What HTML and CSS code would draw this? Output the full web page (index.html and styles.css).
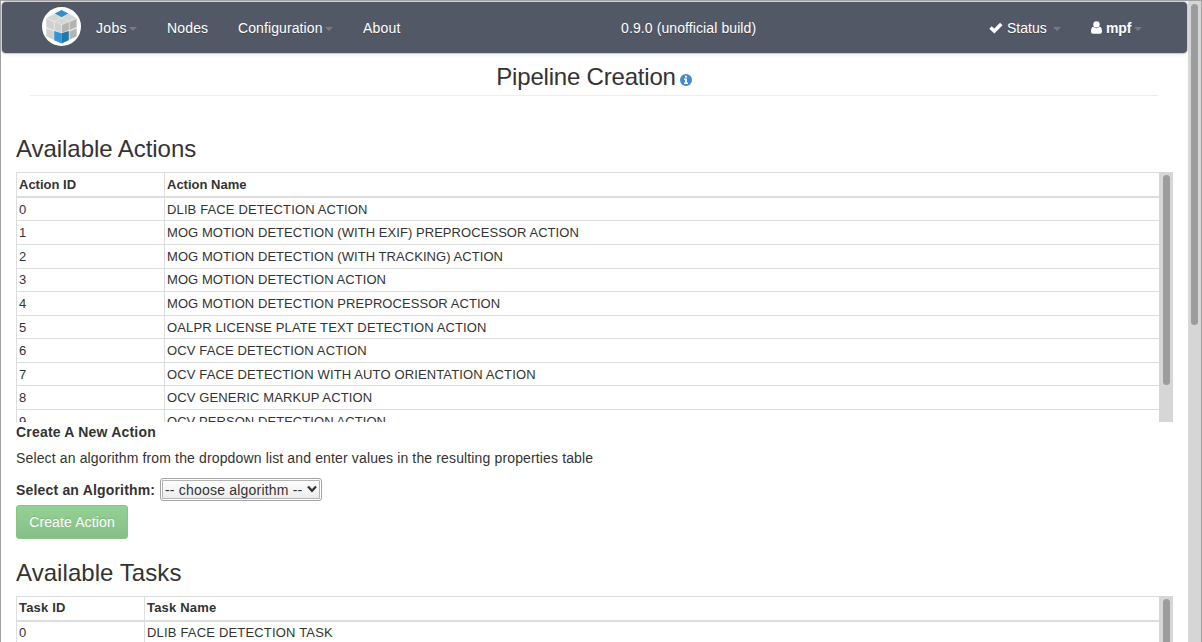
FILE: index.html
```
<!DOCTYPE html>
<html lang="en">
<head>
<meta charset="utf-8">
<title>Pipeline Creation</title>
<link rel="stylesheet" href="styles.css">
</head>
<body>
<div class="viewport">
  <div class="page">
    <nav class="navbar">
      <svg class="logo" viewBox="0 0 40 40" width="39" height="39">
        <circle cx="20" cy="20" r="20" fill="#fff"/>
        <path d="M20 3L35.500 11V30L20 37.500L4.500 30V11Z" fill="#e9e9e7"/>
        <path d="M4.500 12L12 15.500V23.500L4.500 20.500Z M4.500 22L12 25V33.500L4.500 30Z M13 15.500L19.700 18.500V26.300L13 23.500Z" fill="#d0d1cf"/>
        <path d="M35.500 12L28.300 15.500V23.500L35.500 20.500Z M35.500 22L28.300 25V33.500L35.500 30Z M27.500 15.500L20.500 18.500V26.300L27.500 23.500Z" fill="#b3b5b2"/>
        <path d="M12.500 7.300L19.500 11L12.500 14.700L5 11.200Z M27.500 7.300L35 11.200L27.500 14.700L20.500 11Z M20 11.300L27.300 15L20 18L12.700 15Z" fill="#d6d7d4"/>
        <path d="M20 3L27 6.700L20 10.400L13 6.700Z" fill="#2f8fce"/>
        <path d="M12.500 24.500L20 27V37.500L12.500 34Z" fill="#3395d3"/>
        <path d="M27.500 24.500L20 27V37.500L27.500 34Z" fill="#2177b0"/>
      </svg>
      <a class="item jobs">Jobs<i class="caret"></i></a>
      <a class="item nodes">Nodes</a>
      <a class="item config">Configuration<i class="caret"></i></a>
      <a class="item about">About</a>
      <span class="item version">0.9.0 (unofficial build)</span>
      <a class="item status"><svg class="check" viewBox="0 0 14 12" width="14" height="12"><path d="M1.500 5.500L5.300 9L12.300 2" fill="none" stroke="#fff" stroke-width="3.500"/></svg>Status<i class="caret"></i></a>
      <a class="item user"><svg class="person" viewBox="0 0 11 13" width="11" height="13"><circle cx="5.500" cy="3.400" r="3.200" fill="#fff"/><path d="M2.200 5.800Q5.500 8.600 8.800 5.800Q11 6.500 11 10.800Q11 12.800 9 12.800H2Q0 12.800 0 10.800Q0 6.500 2.200 5.800Z" fill="#fff"/></svg>mpf<i class="caret"></i></a>
    </nav>
    <header class="page-header">
      <h1 class="title">Pipeline Creation</h1>
      <svg class="info" viewBox="0 0 12 12" width="12" height="12"><circle cx="6" cy="6" r="6" fill="#428bca"/><path d="M5 1.700H7V3.400H5Z M4 4.500H7V8.500H8V10H4V8.500H5V6H4Z" fill="#fff"/></svg>
    </header>
    <main class="content">
      <h2 class="section-title">Available Actions</h2>
      <div class="grid-box actions">
        <div class="rows">
          <div class="row head"><span class="id">Action ID</span><span class="name">Action Name</span></div>
          <div class="row"><span class="id">0</span><span class="name">DLIB FACE DETECTION ACTION</span></div>
          <div class="row motion"><span class="id">1</span><span class="name">MOG MOTION DETECTION (WITH EXIF) PREPROCESSOR ACTION</span></div>
          <div class="row motion"><span class="id">2</span><span class="name">MOG MOTION DETECTION (WITH TRACKING) ACTION</span></div>
          <div class="row motion"><span class="id">3</span><span class="name">MOG MOTION DETECTION ACTION</span></div>
          <div class="row motion"><span class="id">4</span><span class="name">MOG MOTION DETECTION PREPROCESSOR ACTION</span></div>
          <div class="row"><span class="id">5</span><span class="name">OALPR LICENSE PLATE TEXT DETECTION ACTION</span></div>
          <div class="row"><span class="id">6</span><span class="name">OCV FACE DETECTION ACTION</span></div>
          <div class="row"><span class="id">7</span><span class="name">OCV FACE DETECTION WITH AUTO ORIENTATION ACTION</span></div>
          <div class="row"><span class="id">8</span><span class="name">OCV GENERIC MARKUP ACTION</span></div>
          <div class="row motion"><span class="id">9</span><span class="name">OCV PERSON DETECTION ACTION</span></div>
        </div>
        <div class="track"><div class="thumb"></div></div>
      </div>
      <h3 class="subhead">Create A New Action</h3>
      <p class="help">Select an algorithm from the dropdown list and enter values in the resulting properties table</p>
      <div class="field">
        <label class="label">Select an Algorithm:</label>
        <div class="select"><span class="select-text">-- choose algorithm --</span><svg viewBox="0 0 10 8" width="10" height="8"><path d="M1 1.500L5 5.800L9 1.500" fill="none" stroke="#2e3436" stroke-width="2.200"/></svg></div>
      </div>
      <button class="create">Create Action</button>
      <h2 class="section-title tasks-title">Available Tasks</h2>
      <div class="grid-box tasks">
        <div class="rows">
          <div class="row head"><span class="id">Task ID</span><span class="name">Task Name</span></div>
          <div class="row"><span class="id">0</span><span class="name">DLIB FACE DETECTION TASK</span></div>
        </div>
        <div class="track"><div class="thumb"></div></div>
      </div>
    </main>
  </div>
  <div class="page-track"><div class="page-thumb"></div></div>
</div>
</body>
</html>
```
FILE: styles.css
```
* { box-sizing: border-box; }
body {
  margin: 0;
  background: #fff;
  color: #333;
  font: 14px/20px "Liberation Sans", Arial, sans-serif;
}
.viewport {
  display: flex;
  height: 642px;
  overflow: hidden;
  border: 1px solid #a1a1a1;
  border-bottom: 0;
}
.page { width: 1187px; flex: none; overflow: hidden; }
.navbar {
  display: flex;
  align-items: center;
  height: 51px;
  margin: 1px 1px 0 1px;
  padding-left: 40px;
  border-radius: 4px;
  background: #525865;
  box-shadow: 0 1px 5px rgba(0, 0, 0, .1), 0 0 0 1px #d9d9dd;
  color: #fff;
}
.logo { flex: none; margin: 0 1px 2px 0; }
.item { display: flex; align-items: center; flex: none; height: 20px; white-space: nowrap; text-shadow: 0 1px 0 rgba(0, 0, 0, .25); }
.jobs { width: 71px; margin-left: 14px; letter-spacing: .3px; }
.nodes { width: 71px; letter-spacing: .15px; }
.config { width: 125px; letter-spacing: .1px; }
.about { width: 258px; letter-spacing: .2px; }
.version { width: 368px; letter-spacing: .1px; }
.status { width: 102px; }
.user { font-weight: bold; letter-spacing: -.1px; }
.check { margin-right: 4px; }
.person { margin-right: 4px; }
.caret {
  margin: 3px 0 0 2px;
  border: 4px solid transparent;
  border-top-color: #7b7b7b;
  border-bottom: 0;
}
.status .caret { margin-left: 6px; }
.user .caret { margin-left: 3px; }
.page-header {
  display: flex;
  justify-content: center;
  height: 43px;
  margin: 0 30px 0 29px;
  border-bottom: 1px solid #eee;
}
.title { margin: 7px 4px 0 0; font-size: 24px; line-height: 34px; font-weight: normal; letter-spacing: -.2px; }
.info { margin-top: 21px; }
.content { padding: 0 15px; }
.section-title { margin: 35px 0 6px; font-size: 24px; line-height: 35px; font-weight: normal; letter-spacing: -.05px; }
.grid-box { display: flex; width: 1157px; overflow: hidden; }
.actions { height: 250px; }
.tasks { height: 250px; }
.rows { width: 1143px; flex: none; border-top: 1px solid #ddd; border-left: 1px solid #ddd; }
.row { display: flex; height: 23.57px; border-bottom: 1px solid #ddd; font-size: 13px; line-height: 18.57px; letter-spacing: .13px; }
.motion { letter-spacing: .06px; }
.head { height: 24.9px; border-bottom-width: 2px; font-weight: bold; letter-spacing: 0; }
.id { width: 148px; padding: 2.8px 2px 0; border-right: 1px solid #ddd; }
.tasks .id { width: 128px; }
.name { padding: 2.8px 2px 0; white-space: nowrap; }
.tasks .id, .tasks .name { padding-top: 2px; }
.tasks .row { letter-spacing: .18px; }
.track { width: 14px; background: #d6d6d6; padding: 3px 3px 0 4px; }
.thumb { width: 7px; height: 210px; border-radius: 4px; background: #9b9c9d; }
.subhead { margin: 0; font-size: 14px; line-height: 20px; letter-spacing: .2px; }
.help { margin: 7px 0 9px; line-height: 19px; letter-spacing: .14px; }
.field { display: flex; align-items: center; height: 25px; }
.label { width: 144px; font-weight: bold; white-space: nowrap; letter-spacing: .18px; }
.select {
  display: flex;
  align-items: center;
  justify-content: space-between;
  width: 162px;
  height: 23px;
  margin-bottom: 1px;
  padding: 0 4px;
  border: 1px solid #a6a6a6;
  border-radius: 3px;
  background: linear-gradient(#fff, #eaeaea);
  box-shadow: inset 0 0 0 1px #fff, inset 0 0 0 2px #b5b5b5;
}
.select-text { padding-top: 2px; white-space: nowrap; letter-spacing: .2px; }
.create {
  display: block;
  width: 112px;
  height: 34px;
  margin-top: 3px;
  padding: 0;
  border: 1px solid #89c489;
  border-radius: 3px;
  background: linear-gradient(#94d194, #86bf86);
  color: #fff;
  font: 14px "Liberation Sans", Arial, sans-serif;
  letter-spacing: .12px;
  text-shadow: 0 -1px 0 rgba(0, 0, 0, .12);
}
.tasks-title { margin-top: 16px; margin-bottom: 6px; letter-spacing: .06px; }
.page-track { width: 13px; flex: none; padding: 3px 3px 0; background: #d6d6d6; }
.page-thumb { width: 7px; height: 321px; border-radius: 4px; background: #9b9c9d; }
```
